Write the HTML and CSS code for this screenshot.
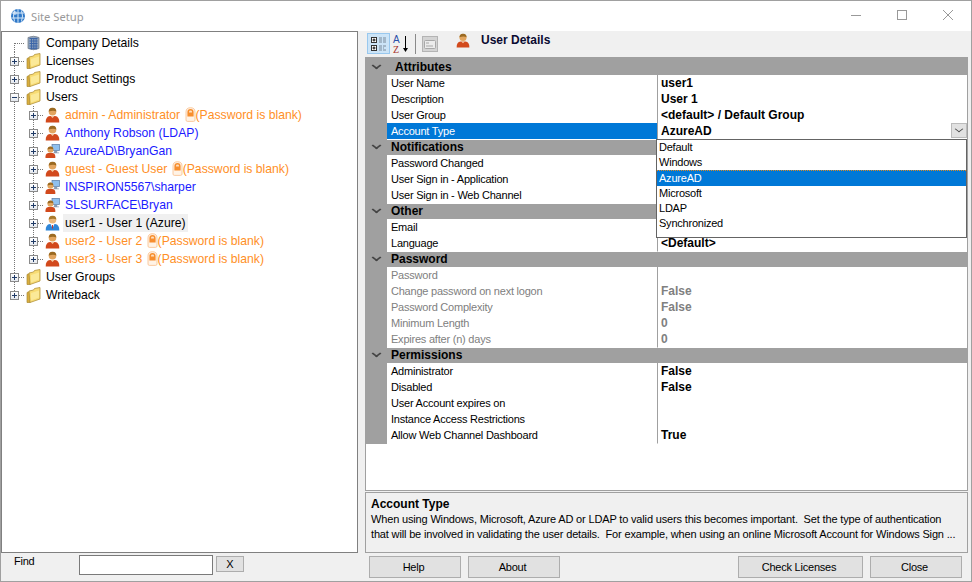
FILE: index.html
```html
<!DOCTYPE html>
<html lang="en">
<head>
  <meta charset="UTF-8">
  <title>Site Setup</title>
  <link rel="stylesheet" href="styles.css">
</head>
<body>

<svg class="defs" width="0" height="0">
  <symbol id="i-folder" viewBox="0 0 14 16">
    <path d="M.5 5.5 L3 4.5 L3.5 15.5 L.5 15.5 Z" fill="#d9ad3c" stroke="#a98a34" stroke-width=".7"/>
    <path d="M2.5 4 L7 3 L8 1.5 L13.5 .5 L13.5 12 L3.5 15.5 Z" fill="#f8dc74" stroke="#b3923a" stroke-width=".8"/>
    <path d="M4.5 6 L12.5 3.5 L12.5 10.5 L4.5 13.5 Z" fill="#fbe998"/>
  </symbol>
  <symbol id="i-db" viewBox="1 0 14 16">
    <path d="M2.5 2.5 Q8 0 13.5 2.5 L13.5 13.5 Q8 16 2.5 13.5 Z" fill="#8fa3bd" stroke="#77808c" stroke-width=".8"/>
    <path d="M4 3.5 H12 M4 6 H12 M4 8.5 H12 M4 11 H12 M4 13.3 H12 M6 3 V14.5 M8.3 3 V14.5 M10.6 3 V14.5" stroke="#3c66a8" stroke-width="1"/>
  </symbol>
  <symbol id="i-user" viewBox="1 0 14 16">
    <path d="M1.2 15.5 Q1 9.5 5.5 9 L10.5 9 Q15 9.5 14.8 15.5 Z" fill="#d2491c"/>
    <path d="M6 9 L8 11 L10 9 Z" fill="#f3c9a0"/>
    <circle cx="8" cy="4.8" r="3.8" fill="#e2a55f"/>
    <path d="M4.2 4.6 Q4.4 .6 8 .8 Q11.8 .6 11.8 4.6 Q9 2.8 4.2 4.6 Z" fill="#9a6a22"/>
  </symbol>
  <symbol id="i-netuser" viewBox="0 0 16 16">
    <rect x="7.5" y="1" width="8" height="6.5" fill="#8fc0ee" stroke="#5f80a8" stroke-width=".8"/>
    <path d="M10 8 H13 V9.5 H15 V10.5 H9 Z" fill="#8a9bb0"/>
    <path d="M.5 15.5 Q0 10.5 3.5 10 L8 10 Q11.5 10.5 11 15.5 Z" fill="#d2491c"/>
    <circle cx="5.8" cy="6.6" r="3.2" fill="#e2a55f"/>
    <path d="M2.7 6.4 Q2.9 3.2 5.8 3.3 Q8.9 3.2 8.9 6.4 Q6.6 5 2.7 6.4 Z" fill="#9a6a22"/>
  </symbol>
  <symbol id="i-blueuser" viewBox="1 0 14 16">
    <path d="M1.2 15.5 Q1 9.5 5.5 9 L10.5 9 Q15 9.5 14.8 15.5 Z" fill="#2f86d8"/>
    <path d="M6 9 L8 13 L10 9 Z" fill="#fff"/>
    <path d="M7.5 10 H8.5 L8.5 13 L8 14 L7.5 13 Z" fill="#c8342a"/>
    <circle cx="8" cy="4.8" r="3.8" fill="#eab77c"/>
    <path d="M4.2 4.6 Q4.4 .6 8 .8 Q11.8 .6 11.8 4.6 Q9 2.8 4.2 4.6 Z" fill="#a87a2c"/>
  </symbol>
  <symbol id="i-lock" viewBox="0 0 11 15">
    <path d="M1 13 V5 Q1 .7 5.5 .7 Q10 .7 10 5 V13 Q10 14.4 8.6 14.4 H2.4 Q1 14.4 1 13 Z" fill="#fff3e6" stroke="#f9c496" stroke-width=".9"/>
    <path d="M2.4 9.5 V5 Q2.4 2 5.5 2 Q8.6 2 8.6 5 V9.5 Z" fill="#f78e2e"/>
    <path d="M4 5.5 V4.8 Q4 3.4 5.5 3.4 Q7 3.4 7 4.8 V5.5 Z" fill="#fde0c2"/>
  </symbol>
</svg>

<div class="window">
  <div class="titlebar">
    <svg class="app-icon" width="16" height="16" viewBox="0 0 16 16">
      <circle cx="8" cy="8" r="7" fill="#2f78c8"/>
      <path d="M2 5 H14 M1.5 10 H14.5 M8 1 V15 M4.5 2.5 Q2.5 8 4.5 13.5 M11.5 2.5 Q13.5 8 11.5 13.5" stroke="#d6e8f8" stroke-width="1" fill="none"/>
      <circle cx="5" cy="5" r="2" fill="#e8f2fb" opacity=".6"/>
    </svg>
    <span class="title">Site Setup</span>
    <div class="win-controls">
      <svg width="12" height="12" viewBox="0 0 12 12"><path d="M1 6.5 H11" stroke="#999" stroke-width="1"/></svg>
      <svg width="12" height="12" viewBox="0 0 12 12"><rect x="1.5" y="1.5" width="9" height="9" fill="none" stroke="#999" stroke-width="1"/></svg>
      <svg width="12" height="12" viewBox="0 0 12 12"><path d="M1 1 L11 11 M11 1 L1 11" stroke="#999" stroke-width="1"/></svg>
    </div>
  </div>

  <div class="main">
    <div class="left-col">
      <div class="tree">
        <div class="tree-row"><span class="cell elbow-first"></span><svg class="ticon"><use href="#i-db"/></svg><span class="label root">Company Details</span></div>
        <div class="tree-row"><span class="cell tee"><i class="exp plus"></i></span><svg class="ticon"><use href="#i-folder"/></svg><span class="label root">Licenses</span></div>
        <div class="tree-row"><span class="cell tee"><i class="exp plus"></i></span><svg class="ticon"><use href="#i-folder"/></svg><span class="label root">Product Settings</span></div>
        <div class="tree-row"><span class="cell tee"><i class="exp minus"></i></span><svg class="ticon"><use href="#i-folder"/></svg><span class="label root">Users</span></div>

        <div class="tree-row"><span class="cell pipe"></span><span class="cell tee"><i class="exp plus"></i></span><svg class="ticon"><use href="#i-user"/></svg><span class="label warn">admin - Administrator <svg class="lock"><use href="#i-lock"/></svg>(Password is blank)</span></div>
        <div class="tree-row"><span class="cell pipe"></span><span class="cell tee"><i class="exp plus"></i></span><svg class="ticon"><use href="#i-user"/></svg><span class="label ext">Anthony Robson (LDAP)</span></div>
        <div class="tree-row"><span class="cell pipe"></span><span class="cell tee"><i class="exp plus"></i></span><svg class="ticon"><use href="#i-netuser"/></svg><span class="label ext">AzureAD\BryanGan</span></div>
        <div class="tree-row"><span class="cell pipe"></span><span class="cell tee"><i class="exp plus"></i></span><svg class="ticon"><use href="#i-user"/></svg><span class="label warn">guest - Guest User <svg class="lock"><use href="#i-lock"/></svg>(Password is blank)</span></div>
        <div class="tree-row"><span class="cell pipe"></span><span class="cell tee"><i class="exp plus"></i></span><svg class="ticon"><use href="#i-netuser"/></svg><span class="label ext">INSPIRON5567\sharper</span></div>
        <div class="tree-row"><span class="cell pipe"></span><span class="cell tee"><i class="exp plus"></i></span><svg class="ticon"><use href="#i-netuser"/></svg><span class="label ext">SLSURFACE\Bryan</span></div>
        <div class="tree-row"><span class="cell pipe"></span><span class="cell tee"><i class="exp plus"></i></span><svg class="ticon"><use href="#i-blueuser"/></svg><span class="label current">user1 - User 1 (Azure)</span></div>
        <div class="tree-row"><span class="cell pipe"></span><span class="cell tee"><i class="exp plus"></i></span><svg class="ticon"><use href="#i-user"/></svg><span class="label warn">user2 - User 2 <svg class="lock"><use href="#i-lock"/></svg>(Password is blank)</span></div>
        <div class="tree-row"><span class="cell pipe"></span><span class="cell elbow"><i class="exp plus"></i></span><svg class="ticon"><use href="#i-user"/></svg><span class="label warn">user3 - User 3 <svg class="lock"><use href="#i-lock"/></svg>(Password is blank)</span></div>

        <div class="tree-row"><span class="cell tee"><i class="exp plus"></i></span><svg class="ticon"><use href="#i-folder"/></svg><span class="label root">User Groups</span></div>
        <div class="tree-row"><span class="cell elbow"><i class="exp plus"></i></span><svg class="ticon"><use href="#i-folder"/></svg><span class="label root">Writeback</span></div>
      </div>
      <div class="find-row">
        <span class="find-label">Find</span>
        <input class="find-input" type="text">
        <button class="find-clear" type="button">X</button>
      </div>
    </div>

    <div class="right-col">
      <div class="toolbar">
        <span class="tool-btn active">
          <svg width="18" height="18" viewBox="0 0 18 18">
            <rect x="1.5" y="2.5" width="5" height="5" fill="#fff" stroke="#333"/><path d="M2.5 5 H5.5 M4 3.5 V6.5" stroke="#000"/>
            <rect x="1.5" y="10.5" width="5" height="5" fill="#fff" stroke="#333"/><path d="M2.5 13 H5.5 M4 11.5 V14.5" stroke="#000"/>
            <path d="M9 3 H16 M9 5 H16 M9 7 H16 M9 11 H16 M9 13 H14 M9 15 H16" stroke="#7a8a9a" stroke-dasharray="3 1"/>
          </svg>
        </span>
        <span class="tool-btn az">
          <svg width="18" height="20" viewBox="0 0 18 20">
            <text x="1" y="9" class="az-a">A</text>
            <text x="1" y="19" class="az-z">Z</text>
            <path d="M13.5 2 V16" stroke="#000"/><path d="M11 14 L13.5 18 L16 14 Z" fill="#000"/>
          </svg>
        </span>
        <span class="tool-sep"></span>
        <span class="tool-btn pages">
          <svg width="16" height="16" viewBox="0 0 16 16">
            <rect x=".5" y=".5" width="15" height="15" fill="#d4d4d4" stroke="#b4b4b4"/>
            <rect x="2.5" y="4.5" width="11" height="8" rx="1" fill="#ececec" stroke="#a8a8a8"/>
            <path d="M4 7 H7 M4 10 H11" stroke="#a8a8a8"/>
          </svg>
        </span>
        <svg class="details-icon"><use href="#i-user"/></svg>
        <span class="details-title">User Details</span>
      </div>

      <div class="props">
        <div class="group">
          <div class="cat first"><span class="chev"></span><span class="cat-name attr">Attributes</span></div>
          <div class="prop-row"><span class="gutter"></span><span class="name">User Name</span><span class="value">user1</span></div>
          <div class="prop-row"><span class="gutter"></span><span class="name">Description</span><span class="value">User 1</span></div>
          <div class="prop-row"><span class="gutter"></span><span class="name">User Group</span><span class="value">&lt;default&gt; / Default Group</span></div>
          <div class="prop-row selected"><span class="gutter"></span><span class="name">Account Type</span><span class="value">AzureAD</span></div>
        </div>
        <div class="group">
          <div class="cat"><span class="chev"></span><span class="cat-name">Notifications</span></div>
          <div class="prop-row"><span class="gutter"></span><span class="name">Password Changed</span><span class="value"></span></div>
          <div class="prop-row"><span class="gutter"></span><span class="name">User Sign in - Application</span><span class="value"></span></div>
          <div class="prop-row"><span class="gutter"></span><span class="name">User Sign in - Web Channel</span><span class="value"></span></div>
        </div>
        <div class="group">
          <div class="cat"><span class="chev"></span><span class="cat-name">Other</span></div>
          <div class="prop-row"><span class="gutter"></span><span class="name">Email</span><span class="value"></span></div>
          <div class="prop-row"><span class="gutter"></span><span class="name">Language</span><span class="value">&lt;Default&gt;</span></div>
        </div>
        <div class="group">
          <div class="cat"><span class="chev"></span><span class="cat-name">Password</span></div>
          <div class="prop-row disabled"><span class="gutter"></span><span class="name">Password</span><span class="value"></span></div>
          <div class="prop-row disabled"><span class="gutter"></span><span class="name">Change password on next logon</span><span class="value">False</span></div>
          <div class="prop-row disabled"><span class="gutter"></span><span class="name">Password Complexity</span><span class="value">False</span></div>
          <div class="prop-row disabled"><span class="gutter"></span><span class="name">Minimum Length</span><span class="value">0</span></div>
          <div class="prop-row disabled"><span class="gutter"></span><span class="name">Expires after (n) days</span><span class="value">0</span></div>
        </div>
        <div class="group">
          <div class="cat"><span class="chev"></span><span class="cat-name">Permissions</span></div>
          <div class="prop-row"><span class="gutter"></span><span class="name">Administrator</span><span class="value">False</span></div>
          <div class="prop-row"><span class="gutter"></span><span class="name">Disabled</span><span class="value">False</span></div>
          <div class="prop-row"><span class="gutter"></span><span class="name">User Account expires on</span><span class="value"></span></div>
          <div class="prop-row"><span class="gutter"></span><span class="name">Instance Access Restrictions</span><span class="value"></span></div>
          <div class="prop-row"><span class="gutter"></span><span class="name">Allow Web Channel Dashboard</span><span class="value">True</span></div>
        </div>

        <span class="combo-btn"><span class="chev small"></span></span>
        <ul class="dropdown">
          <li>Default</li>
          <li>Windows</li>
          <li class="picked">AzureAD</li>
          <li>Microsoft</li>
          <li>LDAP</li>
          <li>Synchronized</li>
        </ul>
      </div>

      <div class="help">
        <div class="help-title">Account Type</div>
        <div class="help-line">When using Windows, Microsoft, Azure AD or LDAP to valid users this becomes important.&nbsp; Set the type of authentication</div>
        <div class="help-line">that will be involved in validating the user details.&nbsp; For example, when using an online Microsoft Account for Windows Sign ...</div>
      </div>

      <div class="buttons">
        <button class="btn" type="button">Help</button>
        <button class="btn" type="button">About</button>
        <button class="btn wide push" type="button">Check Licenses</button>
        <button class="btn" type="button">Close</button>
      </div>
    </div>
  </div>
</div>

</body>
</html>
```

FILE: styles.css
```css
* {
  box-sizing: border-box;
}

body {
  margin: 0;
  background: #f0f0f0;
  font-family: "Liberation Sans", Arial, sans-serif;
  font-size: 11px;
  letter-spacing: -0.22px;
  color: #000;
}

.defs {
  position: absolute;
}

.window {
  width: 972px;
  height: 582px;
  border: 1px solid #a0a0a0;
  display: flex;
  flex-direction: column;
  overflow: hidden;
}

/* title bar */
.titlebar {
  height: 30px;
  flex: none;
  background: #fff;
  display: flex;
  align-items: center;
  padding-left: 9px;
}

.app-icon {
  margin-right: 5px;
}

.title {
  color: #999;
  font-family: "Noto Sans", sans-serif;
  font-size: 11.2px;
  letter-spacing: 0;
}

.win-controls {
  margin-left: auto;
  display: flex;
  gap: 34px;
  padding-right: 17px;
  margin-top: -3px;
}

.main {
  flex: 1;
  display: flex;
  min-height: 0;
}

/* left side: tree */
.left-col {
  width: 357px;
  display: flex;
  flex-direction: column;
}

.tree {
  height: 522px;
  background: #fff;
  border: 1px solid #808080;
  padding: 2px 0 0 3px;
}

.tree-row {
  height: 18px;
  display: flex;
  align-items: center;
  font-size: 12.2px;
  letter-spacing: 0;
}

.cell {
  width: 19px;
  height: 18px;
  flex: none;
  display: flex;
  align-items: center;
  justify-content: center;
  background-repeat: no-repeat;
}

.pipe {
  background-image: repeating-linear-gradient(to bottom, #777 0 1px, transparent 1px 2px);
  background-size: 1px 100%;
  background-position: 9px 0;
}

.tee {
  background-image:
    repeating-linear-gradient(to bottom, #777 0 1px, transparent 1px 2px),
    repeating-linear-gradient(to right, #777 0 1px, transparent 1px 2px);
  background-size: 1px 100%, 9px 1px;
  background-position: 9px 0, 10px 9px;
}

.elbow {
  background-image:
    repeating-linear-gradient(to bottom, #777 0 1px, transparent 1px 2px),
    repeating-linear-gradient(to right, #777 0 1px, transparent 1px 2px);
  background-size: 1px 9px, 9px 1px;
  background-position: 9px 0, 10px 9px;
}

.elbow-first {
  background-image:
    repeating-linear-gradient(to bottom, #777 0 1px, transparent 1px 2px),
    repeating-linear-gradient(to right, #777 0 1px, transparent 1px 2px);
  background-size: 1px 9px, 9px 1px;
  background-position: 9px 9px, 10px 9px;
}

.exp {
  width: 9px;
  height: 9px;
  border: 1px solid #8a8a8a;
  background: linear-gradient(#fff, #e4e8ee);
  display: block;
  position: relative;
}

.exp::before,
.exp::after {
  content: "";
  position: absolute;
  background: #1f3a66;
}

.exp::before {
  left: 1px;
  top: 3px;
  width: 5px;
  height: 1px;
}

.plus::after {
  left: 3px;
  top: 1px;
  width: 1px;
  height: 5px;
}

.ticon {
  width: 15px;
  height: 16px;
  margin-left: 2px;
  flex: none;
}

.label {
  margin-left: 3px;
  padding: 0 2px;
  height: 18px;
  line-height: 18px;
  white-space: nowrap;
}

.warn {
  color: #ff8f26;
}

.ext {
  color: #1a1aff;
}

.current {
  background: #f0f0f0;
}

.lock {
  width: 11px;
  height: 15px;
  margin-left: 1px;
  vertical-align: -3px;
}

/* left side: find */
.find-row {
  flex: 1;
  display: flex;
  align-items: flex-start;
  padding: 1px 0 0 13px;
}

.find-label {
  width: 65px;
  margin-top: 1px;
}

.find-input {
  width: 134px;
  height: 20px;
  margin-top: 1px;
  border: 1px solid #7a7a7a;
  background: #fff;
  padding: 0;
}

.find-clear {
  width: 28px;
  height: 16px;
  margin: 2px 0 0 3px;
  padding: 0;
  border: 1px solid #adadad;
  background: #e1e1e1;
  font: 11px "Liberation Sans", sans-serif;
}

/* right side */
.right-col {
  width: 603px;
  margin-left: 7px;
  display: flex;
  flex-direction: column;
}

.toolbar {
  height: 26px;
  flex: none;
  display: flex;
  align-items: flex-start;
  padding: 2px 0 0 2px;
}

.tool-btn {
  display: flex;
  align-items: center;
  justify-content: center;
  height: 21px;
}

.tool-btn.active {
  width: 23px;
  background: #cce4f7;
  border: 1px solid #99c8ee;
}

.tool-btn.az {
  width: 18px;
  margin-left: 2px;
}

.az-a {
  font: 10px "Liberation Sans", sans-serif;
  fill: #2a4fa8;
}

.az-z {
  font: 10px "Liberation Serif", serif;
  fill: #a8322a;
}

.tool-sep {
  width: 1px;
  height: 20px;
  margin: 1px 0 0 5px;
  background: #8a8a8a;
}

.tool-btn.pages {
  width: 16px;
  margin-left: 6px;
}

.details-icon {
  width: 14px;
  height: 15px;
  margin: 0 0 0 18px;
}

.details-title {
  margin: 0 0 0 11px;
  font-size: 12px;
  letter-spacing: 0;
  font-weight: bold;
  color: #0a0a30;
}

.props {
  height: 434px;
  flex: none;
  position: relative;
  background: #fff;
  border: 1px solid #a0a0a0;
  border-top: 0;
}

.cat {
  height: 16px;
  background: #a0a0a0;
  border-top: 1px solid #f0f0f0;
  padding-bottom: 2px;
  display: flex;
  align-items: center;
  font-size: 12px;
  letter-spacing: 0;
  font-weight: bold;
}

.cat.first {
  height: 18px;
  border-top: 0;
  padding: 2px 0 0;
}

.chev {
  width: 7px;
  height: 7px;
  border-right: 2px solid #444;
  border-bottom: 2px solid #444;
  transform: scale(1, .75) rotate(45deg);
  margin: -3px 0 0 7px;
  flex: none;
}

.cat-name {
  margin-left: 11px;
}

.cat-name.attr {
  margin-left: 15px;
}

.prop-row {
  height: 16px;
  display: grid;
  grid-template-columns: 21px 270px 1fr;
  line-height: 16px;
}

.gutter {
  background: #a0a0a0;
}

.name {
  background: #fff;
  padding-left: 4px;
  border-bottom: 1px solid #a0a0a0;
  white-space: nowrap;
}

.value {
  background: #fff;
  padding-left: 3px;
  border-left: 1px solid #a0a0a0;
  border-bottom: 1px solid #a0a0a0;
  font-size: 12px;
  letter-spacing: 0;
  font-weight: bold;
  white-space: nowrap;
}

.prop-row:last-child .name,
.prop-row:last-child .value {
  border-bottom-color: #fff;
}

.selected .name {
  background: #0078d7;
  color: #fff;
}

.disabled .name,
.disabled .value {
  color: #808080;
}

.combo-btn {
  position: absolute;
  left: 585px;
  top: 66px;
  width: 16px;
  height: 15px;
  background: #e1e1e1;
  border: 1px solid #bbb;
  display: flex;
  justify-content: center;
}

.chev.small {
  width: 6px;
  height: 6px;
  border-width: 1px;
  border-color: #444;
  margin: 2px 0 0 0;
}

.dropdown {
  position: absolute;
  left: 290px;
  top: 82px;
  width: 311px;
  height: 99px;
  margin: 0;
  padding: 0;
  list-style: none;
  background: #fff;
  border: 1px solid #646464;
}

.dropdown li {
  height: 15px;
  line-height: 15px;
  padding-left: 2px;
}

.dropdown .picked {
  height: 16px;
  background: #0078d7;
  color: #fff;
  border-top: 1px dotted #e08a20;
}

.help {
  height: 61px;
  flex: none;
  border: 1px solid #a0a0a0;
  padding: 4px 0 0 5px;
  line-height: 15px;
  letter-spacing: -0.16px;
  white-space: nowrap;
  margin-top: 1px;
}

.help-title {
  font-size: 12px;
  letter-spacing: 0;
  font-weight: bold;
}

.buttons {
  display: flex;
  gap: 7px;
  padding: 3px 6px 0 4px;
}

.btn {
  width: 92px;
  height: 22px;
  padding: 0 3px 0 0;
  background: #e1e1e1;
  border: 1px solid #adadad;
  font: 11px "Liberation Sans", sans-serif;
  letter-spacing: -0.22px;
}

.btn.wide {
  width: 125px;
}

.btn.push {
  margin-left: auto;
}
```
